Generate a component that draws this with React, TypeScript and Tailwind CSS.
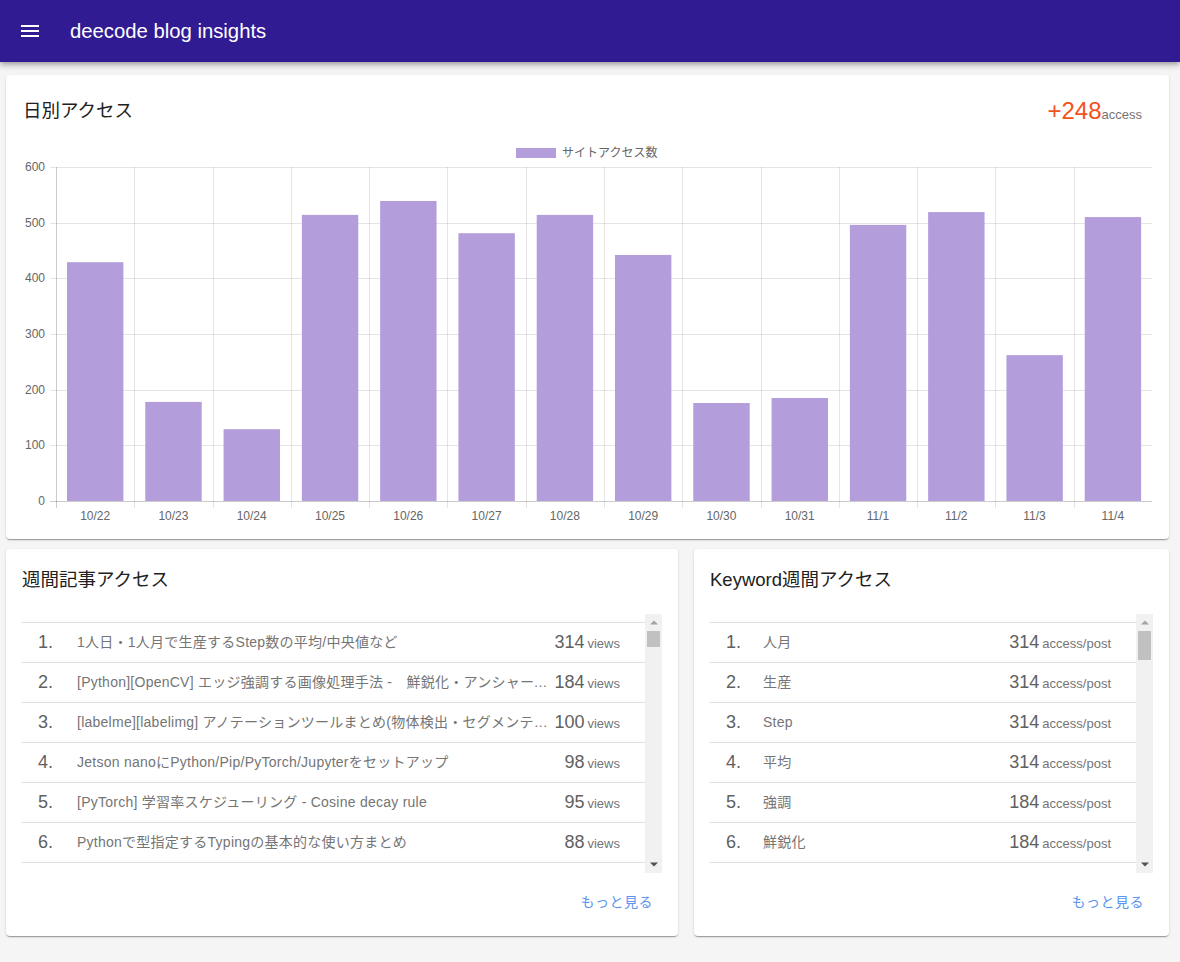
const values = [429, 178, 129, 514, 539, 481, 514, 442, 176, 185, 496, 519, 262, 510];
const labels = ["10/22", "10/23", "10/24", "10/25", "10/26", "10/27", "10/28", "10/29", "10/30", "10/31", "11/1", "11/2", "11/3", "11/4"];

const articles = [
  { t: "1人日・1人月で生産するStep数の平均/中央値など", v: 314 },
  { t: "[Python][OpenCV] エッジ強調する画像処理手法 -　鮮鋭化・アンシャープマスク", v: 184 },
  { t: "[labelme][labelimg] アノテーションツールまとめ(物体検出・セグメンテーション)", v: 100 },
  { t: "Jetson nanoにPython/Pip/PyTorch/Jupyterをセットアップ", v: 98 },
  { t: "[PyTorch] 学習率スケジューリング - Cosine decay rule", v: 95 },
  { t: "Pythonで型指定するTypingの基本的な使い方まとめ", v: 88 },
];

const keywords = [
  { t: "人月", v: 314 },
  { t: "生産", v: 314 },
  { t: "Step", v: 314 },
  { t: "平均", v: 314 },
  { t: "強調", v: 184 },
  { t: "鮮鋭化", v: 184 },
];

// chart in page coordinates (viewBox matches the page)
const left = 56;
const right = 1152;
const bottom = 501;
const colW = (right - left) / 14;
const yOf = (v: number) => bottom - (v * 334) / 600;

const Chart = () => {
  return (
    <svg width="1163" height="413" viewBox="6 126 1163 413" className="block">
      <rect x="516" y="148" width="40" height="10" fill="#b39ddb" />
      <text x="562" y="157" fontSize="12" fill="#666" fontFamily="'Noto Sans CJK JP', sans-serif">
        サイトアクセス数
      </text>
      {[600, 500, 400, 300, 200, 100].map((v) => (
        <line key={v} x1="50" x2={right} y1={Math.round(yOf(v)) + 0.5} y2={Math.round(yOf(v)) + 0.5} stroke="rgba(0,0,0,0.1)" />
      ))}
      {labels.map((_, i) => {
        const x = Math.round(left + colW * i) + 0.5;
        return <line key={i} x1={x} x2={x} y1="167" y2="508" stroke={i === 0 ? "rgba(0,0,0,0.2)" : "rgba(0,0,0,0.1)"} />;
      })}
      <line x1="50" x2={right} y1={bottom + 0.5} y2={bottom + 0.5} stroke="rgba(0,0,0,0.2)" />
      {[600, 500, 400, 300, 200, 100, 0].map((v) => (
        <text key={v} x="45" y={yOf(v) + 4} textAnchor="end" fontSize="12" fill="#666" fontFamily="'Liberation Sans', sans-serif">
          {v}
        </text>
      ))}
      {values.map((v, i) => {
        const x = left + colW * i + 11;
        return <rect key={i} x={x} y={yOf(v)} width={56.4} height={bottom - yOf(v)} fill="#b39ddb" />;
      })}
      {labels.map((l, i) => (
        <text key={l} x={left + colW * i + colW / 2} y="520" textAnchor="middle" fontSize="12" fill="#666" fontFamily="'Liberation Sans', sans-serif">
          {l}
        </text>
      ))}
    </svg>
  );
};

const Scrollbar = ({ thumb }: { thumb: string }) => {
  return (
    <div className="w-[17px] shrink-0 bg-[#f1f1f1] flex flex-col">
      <div className="h-[17px] flex items-center justify-center">
        <svg width="8" height="5" viewBox="0 0 8 5">
          <path d="M0 4.5L4 0.5L8 4.5Z" fill="#a3a3a3" />
        </svg>
      </div>
      <div className={"mx-[2px] bg-[#c1c1c1] " + thumb} />
      <div className="flex-1" />
      <div className="h-[17px] flex items-center justify-center">
        <svg width="8" height="5" viewBox="0 0 8 5">
          <path d="M0 0.5L4 4.5L8 0.5Z" fill="#505050" />
        </svg>
      </div>
    </div>
  );
};

const RankList = ({ items, unit, thumb, textLeft }: { items: { t: string; v: number }[]; unit: string; thumb: string; textLeft: string }) => {
  return (
    <div className="flex h-[259px]">
      <div className="flex-1 min-w-0 overflow-hidden pt-2">
        {items.map((it, i) => (
          <div key={i} className="h-10 flex items-center border-t border-[#e0e0e0] pl-4 pr-[25px] last:h-[41px] last:border-b">
            <span className={"shrink-0 text-[18px] text-[#616161] " + textLeft}>{i + 1}.</span>
            <span className="flex-1 min-w-0 truncate text-[14px] text-[#757575] tracking-[0.25px]">{it.t}</span>
            <span className="ml-[6px] shrink-0 flex items-baseline gap-[3px]">
              <span className="text-[18px] text-[#616161]">{it.v}</span>
              <span className="text-[13px] text-[#757575]">{unit}</span>
            </span>
          </div>
        ))}
      </div>
      <Scrollbar thumb={thumb} />
    </div>
  );
};

const cardShadow =
  "bg-white rounded-[4px] shadow-[0_2px_1px_-1px_rgba(0,0,0,0.2),0_1px_1px_0_rgba(0,0,0,0.14),0_1px_3px_0_rgba(0,0,0,0.12)]";

const App = () => {
  return (
    <div className="min-h-[962px] bg-[#f5f5f5] font-['Liberation_Sans','Noto_Sans_CJK_JP',sans-serif]">
      <header className="relative z-10 h-[62px] bg-[#311b92] flex items-center shadow-[0_2px_4px_-1px_rgba(0,0,0,0.2),0_4px_5px_0_rgba(0,0,0,0.14),0_1px_10px_0_rgba(0,0,0,0.12)]">
        <svg className="ml-[18px]" width="24" height="24" viewBox="0 0 24 24" fill="#fff">
          <path d="M3 18h18v-2H3v2zm0-5h18v-2H3v2zm0-7v2h18V6H3z" />
        </svg>
        <h1 className="ml-[28px] text-white text-[20.3px]">deecode blog insights</h1>
      </header>

      <main className="pl-[6px] pr-[11px] pt-[13px] flex flex-col gap-[10px]">
        <section className={cardShadow + " h-[464px] pt-[19px]"}>
          <div className="h-8 flex items-center justify-between pt-[2px] pl-[17px] pr-[27px]">
            <h2 className="text-[18.5px] text-[#212121]">日別アクセス</h2>
            <div className="flex items-baseline">
              <span className="text-[24px] text-[#f4511e]">+248</span>
              <span className="text-[13px] text-[#757575]">access</span>
            </div>
          </div>
          <Chart />
        </section>

        <div className="flex gap-4">
          <section className={cardShadow + " w-[672px] pt-[14px] px-4"}>
            <h2 className="h-8 flex items-center pt-[2px] text-[18.5px] text-[#212121]">週間記事アクセス</h2>
            <div className="mt-[19px]">
              <RankList items={articles} unit="views" thumb="h-[16px]" textLeft="w-[39px]" />
            </div>
            <div className="pt-[18px] pb-[23px] flex justify-end pr-[9px]">
              <button className="text-[14px] leading-[22px] text-[#5c95f0] tracking-[0.5px]">もっと見る</button>
            </div>
          </section>

          <section className={cardShadow + " flex-1 pt-[14px] px-4"}>
            <h2 className="h-8 flex items-center pt-[2px] text-[18.5px] text-[#212121]">Keyword週間アクセス</h2>
            <div className="mt-[19px]">
              <RankList items={keywords} unit="access/post" thumb="h-[29px]" textLeft="w-[37px]" />
            </div>
            <div className="pt-[18px] pb-[23px] flex justify-end pr-[9px]">
              <button className="text-[14px] leading-[22px] text-[#5c95f0] tracking-[0.5px]">もっと見る</button>
            </div>
          </section>
        </div>
      </main>
    </div>
  );
};

export default App;
